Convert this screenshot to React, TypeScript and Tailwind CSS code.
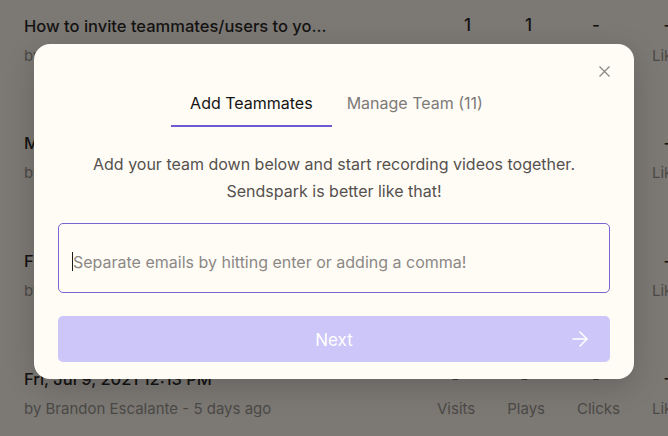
import React from 'react';
import { ArrowRight } from 'lucide-react';

interface Row {
  title: string;
  by: string;
  stats: string[];
}

const rows: Row[] = [
  { title: 'How to invite teammates/users to yo...', by: 'by Brandon Escalante - 5 days ago', stats: ['1', '1', '-', '-'] },
  { title: 'My Sendspark walkthrough video', by: 'by Brandon Escalante - 5 days ago', stats: ['-', '-', '-', '-'] },
  { title: 'Fri, Jul 9, 2021 12:20 PM', by: 'by Brandon Escalante - 5 days ago', stats: ['-', '-', '-', '-'] },
  { title: 'Fri, Jul 9, 2021 12:13 PM', by: 'by Brandon Escalante - 5 days ago', stats: ['-', '-', '-', '-'] },
];

const labels = ['Visits', 'Plays', 'Clicks', 'Likes'];

const VideoRow = ({ row, first }: { row: Row; first: boolean }) => (
  <div className="h-[117.67px] shrink-0">
    <div className="flex items-center h-6">
      <div className="w-[413px] shrink-0 text-[16.5px] font-medium text-[#141312] truncate">{row.title}</div>
      <div className="flex gap-8">
        {row.stats.map((s, i) => (
          <span
            key={i}
            className={
              'text-center text-[17px] font-medium text-[#141312] ' +
              (i === 2 ? 'w-[42px] ' : 'w-[37px] ') +
              (first && i === 0 ? 'pl-6' : first && i === 1 ? 'pl-2' : '')
            }
          >
            {s}
          </span>
        ))}
      </div>
    </div>
    <div className="flex items-center h-5 mt-2 text-[15px] text-[#4b4946]">
      <div className="w-[413px] shrink-0">{row.by}</div>
      <div className="flex gap-8">
        {labels.map((l) => (
          <span key={l}>{l}</span>
        ))}
      </div>
    </div>
  </div>
);

export default function App() {
  return (
    <div
      className="relative w-[668px] h-[436px] overflow-hidden bg-[#7c7975]"
      style={{ fontFamily: 'Inter, "Noto Sans", sans-serif' }}
    >
      {/* page underneath the overlay */}
      <div className="flex flex-col w-[720px] pl-6 pt-[14px]">
        {rows.map((r, i) => (
          <VideoRow key={i} row={r} first={i === 0} />
        ))}
      </div>

      {/* modal */}
      <div className="absolute left-[34px] top-[44px] w-[600px] h-[335px] rounded-2xl bg-[#fffcf6] shadow-[0_8px_30px_rgba(0,0,0,0.18)] px-6 pt-[47px] pb-[17px] flex flex-col">
        <button className="absolute top-[22px] right-[24px] w-[11px] h-[11px] text-[#8b8885]">
          <svg viewBox="0 0 11 11" width="11" height="11" fill="none" stroke="currentColor" strokeWidth="1.3">
            <path d="M0.5 0.5L10.5 10.5M10.5 0.5L0.5 10.5" />
          </svg>
        </button>

        <div className="flex justify-center">
          <div className="px-[19px] pb-[10px] border-b-2 border-[#6c5bd3] text-base leading-6 text-[#151413]">Add Teammates</div>
          <div className="pl-[15px] pr-[14px] pb-[10px] border-b-2 border-transparent text-base leading-6 text-[#7d7a77]">Manage Team (11)</div>
        </div>

        <p className="mt-6 text-center text-base leading-[27px] text-[#55514e]">
          Add your team down below and start recording videos together.
          <br />
          Sendspark is better like that!
        </p>

        <div className="mt-[18px] h-[70px] rounded-[5px] border border-[#7566d4] pl-[13px] pt-[26px] flex items-start">
          <span className="w-px h-[19px] bg-[#1b1a19] mt-[2px] shrink-0" />
          <span className="text-base leading-6 text-[#8c8885]">Separate emails by hitting enter or adding a comma!</span>
        </div>

        <button className="mt-[23px] h-[47px] rounded-[5px] bg-[#cdc6f8] flex items-center px-[18px] pt-[3px] text-white">
          <span className="w-6 shrink-0" />
          <span className="flex-1 text-center text-[17px]">Next</span>
          <ArrowRight size={24} strokeWidth={1.5} className="shrink-0 -mt-[3px]" />
        </button>
      </div>
    </div>
  );
}
